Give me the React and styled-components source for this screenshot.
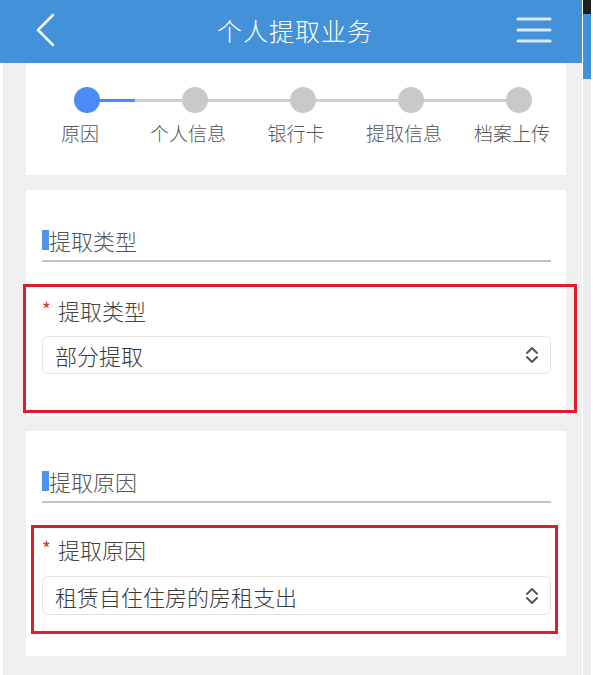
import React from 'react';
import styled, { createGlobalStyle } from 'styled-components';

const GlobalStyle = createGlobalStyle`
  html, body {
    margin: 0;
    padding: 0;
    background: #ffffff;
    overflow: hidden;
  }
  body {
    font-family: "Noto Sans CJK SC", "Noto Sans", sans-serif;
    font-weight: 300;
  }
`;

const Page = styled.div`
  display: flex;
  height: 675px;
  width: 593px;
`;

const Main = styled.div`
  width: 583px;
  display: flex;
  flex-direction: column;
`;

const Header = styled.div`
  height: 63px;
  flex-shrink: 0;
  background: #4291d9;
  display: flex;
  align-items: center;
  justify-content: space-between;
  padding: 0 30px 3px 36px;
  box-sizing: border-box;
`;

const Title = styled.div`
  color: #ffffff;
  font-size: 25px;
  letter-spacing: 1px;
  padding-left: 18px;
`;

const IconBox = styled.div`
  width: ${p => p.w}px;
  height: 34px;
  display: flex;
  align-items: center;
`;

const Content = styled.div`
  flex: 1;
  margin-left: 3px;
  background: #efefef;
  padding: 0 16px 0 23px;
  display: flex;
  flex-direction: column;
  gap: 15px;
`;

const Card = styled.div`
  background: #ffffff;
  padding: ${p => p.pad};
`;

const StepDots = styled.div`
  position: relative;
  display: grid;
  grid-template-columns: repeat(5, 1fr);
  transform: translateX(7px);
  &::before {
    content: "";
    position: absolute;
    left: 54px;
    right: 54px;
    top: 12px;
    height: 3px;
    background: #cfcfcf;
  }
  &::after {
    content: "";
    position: absolute;
    left: 54px;
    width: 48px;
    top: 12px;
    height: 3px;
    background: #4b8bf5;
  }
`;

const Dot = styled.div`
  position: relative;
  z-index: 1;
  justify-self: center;
  width: 26px;
  height: 26px;
  border-radius: 50%;
  background: ${p => (p.active ? '#4b8bf5' : '#c9c9c9')};
`;

const StepLabels = styled.div`
  display: grid;
  grid-template-columns: repeat(5, 1fr);
  margin-top: 9px;
`;

const StepLabel = styled.div`
  text-align: center;
  font-size: 19px;
  line-height: 22px;
  color: #555555;
`;

const SectionTitle = styled.div`
  display: flex;
  align-items: center;
  height: 24px;
  font-size: 22px;
  color: #555555;
  &::before {
    content: "";
    width: 7px;
    height: 20px;
    margin-top: -1px;
    background: #4a94f0;
  }
`;

const Divider = styled.div`
  height: 2px;
  background: #c4c4c4;
  margin: 8px 0 22px;
`;

const Marked = styled.div`
  border: 3px solid #dc1f2b;
  margin: ${p => p.m};
  padding: ${p => p.pad};
`;

const Label = styled.div`
  display: flex;
  align-items: center;
  height: 24px;
  font-size: 22px;
  color: #444444;
  margin-bottom: ${p => p.mb}px;
`;

const Star = styled.span`
  color: #e0322f;
  font-size: 19px;
  font-weight: 400;
  width: 16px;
  margin-top: -3px;
`;

const Select = styled.div`
  height: ${p => p.h}px;
  box-sizing: border-box;
  border: 1px solid #e2e2e2;
  border-radius: 6px;
  display: flex;
  align-items: center;
  justify-content: space-between;
  padding: 0 11px 0 12px;
  font-size: 22px;
  color: #3a3a3a;
`;

const Scrollbar = styled.div`
  width: 8px;
  margin: 0 2px 0 1px;
  background: #ececec;
  display: flex;
  flex-direction: column;
`;

const ScrollTop = styled.div`
  height: 14px;
  background: #1e1e1e;
`;

const Thumb = styled.div`
  height: 65px;
  background: #4291d9;
`;

const Chevrons = () => (
  <svg width="14" height="18" viewBox="0 0 14 18" fill="none" stroke="#555" strokeWidth="2" strokeLinecap="round" strokeLinejoin="round">
    <polyline points="2,7 7,2 12,7" />
    <polyline points="2,11 7,16 12,11" />
  </svg>
);

const steps = ['原因', '个人信息', '银行卡', '提取信息', '档案上传'];

const Field = ({ title, value, m, pad, mb, h }) => (
  <>
    <SectionTitle>{title}</SectionTitle>
    <Divider />
    <Marked m={m} pad={pad}>
      <Label mb={mb}><Star>*</Star>{title}</Label>
      <Select h={h}>
        <span>{value}</span>
        <Chevrons />
      </Select>
    </Marked>
  </>
);

export default function App() {
  return (
    <>
      <GlobalStyle />
      <Page>
        <Main>
          <Header>
            <IconBox w={20}>
              <svg width="20" height="34" viewBox="0 0 20 34" fill="none" stroke="#f2f6fb" strokeWidth="2.6" strokeLinecap="round" strokeLinejoin="round">
                <polyline points="17,2 2,17 17,32" />
              </svg>
            </IconBox>
            <Title>个人提取业务</Title>
            <IconBox w={36}>
              <svg width="36" height="26" viewBox="0 0 36 26" stroke="#dfe9f5" strokeWidth="3.2" strokeLinecap="round">
                <line x1="2" y1="2" x2="34" y2="2" />
                <line x1="2" y1="13" x2="34" y2="13" />
                <line x1="2" y1="24" x2="34" y2="24" />
              </svg>
            </IconBox>
          </Header>
          <Content>
            <Card pad="24px 0 31px">
              <StepDots>
                {steps.map((s, i) => <Dot key={s} active={i === 0} />)}
              </StepDots>
              <StepLabels>
                {steps.map(s => <StepLabel key={s}>{s}</StepLabel>)}
              </StepLabels>
            </Card>
            <Card pad="38px 15px 3px 16px">
              <Field title="提取类型" value="部分提取" m="0 -26px 0 -19px" pad="11px 23px 36px 16px" mb={14} h={38} />
            </Card>
            <Card pad="38px 15px 22px 16px">
              <Field title="提取原因" value="租赁自住住房的房租支出" m="0 -7px 0 -11px" pad="9px 4px 16px 8px" mb={15} h={39} />
            </Card>
          </Content>
        </Main>
        <Scrollbar>
          <ScrollTop />
          <Thumb />
        </Scrollbar>
      </Page>
    </>
  );
}
